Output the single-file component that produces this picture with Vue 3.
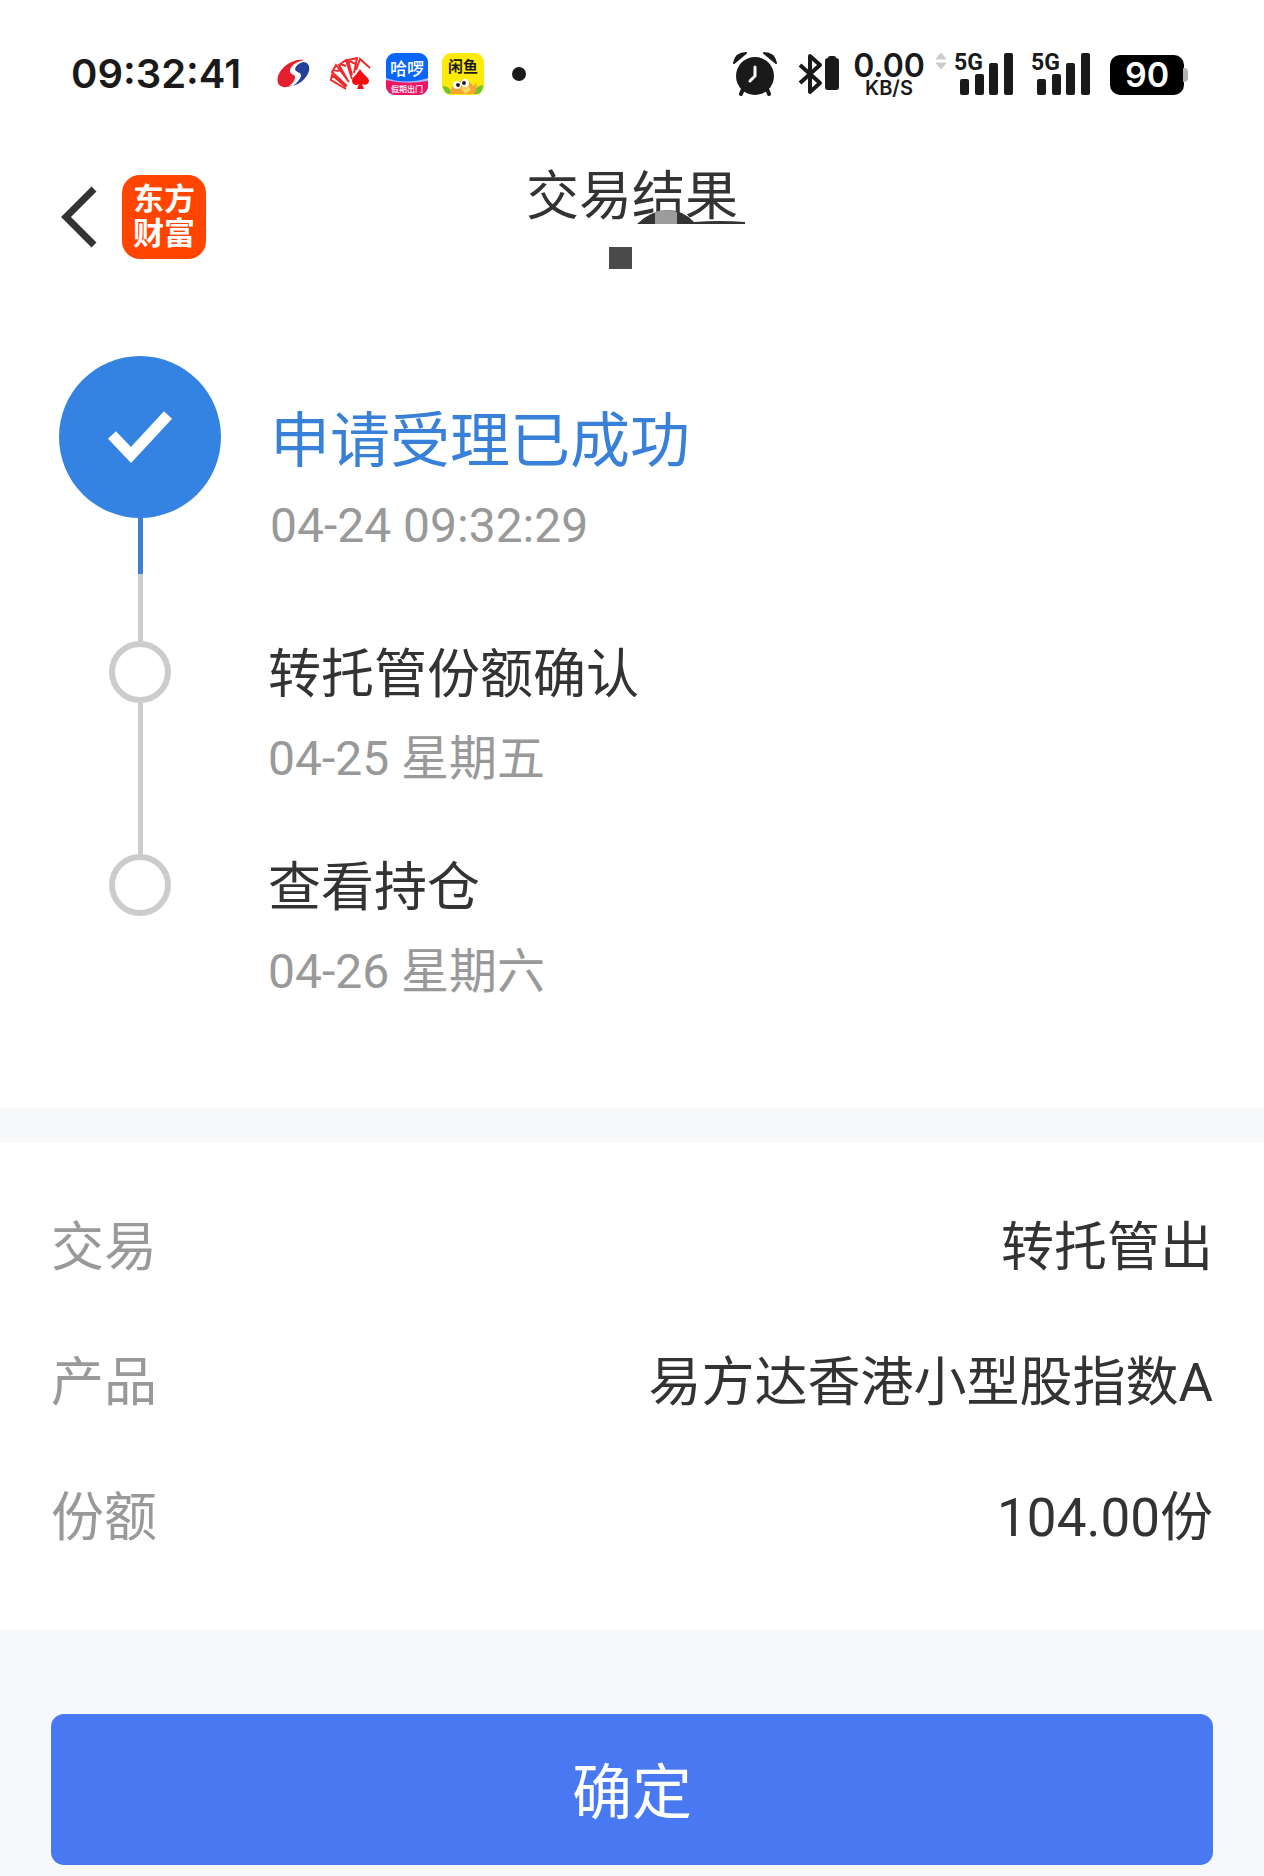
<script setup>
const steps = [
  { title: '申请受理已成功', time: '04-24 09:32:29', done: true },
  { title: '转托管份额确认', time: '04-25 星期五', done: false },
  { title: '查看持仓', time: '04-26 星期六', done: false },
]
const details = [
  { label: '交易', value: '转托管出' },
  { label: '产品', value: '易方达香港小型股指数A' },
  { label: '份额', value: '104.00份' },
]
const networks = [{ id: 1, arrows: true }, { id: 2, arrows: false }]
</script>

<template>
  <div class="page">
    <div class="status">
      <time class="clock">09:32:41</time>
      <div class="notices">
        <svg width="34" height="30" viewBox="0 0 34 30" aria-hidden="true">
          <path d="M28 1C17-1 5 8 2 17c-2 8 2 12 9 11 7-1 10-6 10-10 0-3-5-3-5-6 0-5 6-9 12-11z" fill="#e5202e" />
          <path d="M27 3c5 0 7 4 6 9-2 7-9 13-16 15 5-4 8-8 8-11s-7-3-6-7c1-3 4-5 8-6z" fill="#24409a" />
          <path d="M29 2c-8-1-15 5-15 10 0 4 6 3 5 7-1 4-3 6-6 8 6-1 10-5 10-10 0-4-5-4-4-7 1-4 5-7 10-8z" fill="#fff" />
        </svg>
        <svg width="44" height="38" viewBox="0 0 44 38" fill="none" stroke="#ee2a2d" stroke-width="2" aria-hidden="true">
          <path d="M18 34 3 25l1-5 14 12M19 31 4 17l4-7 13 17M20 26 11 10l7-5 6 19M24 20 20 5l9-2-3 15M28 15l4-11 10 9M3 22h5M5 15l6 1M12 9l6 2M21 6l7 3" />
          <path d="M32 14c-3 6-8 8-8 12 0 4 5 5 7 3l-2 5h7l-2-5c3 2 7 0 7-3 0-4-6-6-9-12z" fill="#f50d10" stroke="none" />
        </svg>
        <svg width="42" height="42" viewBox="0 0 42 42" aria-hidden="true">
          <clipPath id="hello"><rect width="42" height="42" rx="9" /></clipPath>
          <g clip-path="url(#hello)">
            <path d="M0 0h42v42H0z" fill="#0a66fa" />
            <path d="M0 25q20 7 42 0v5H0z" fill="#a9b8ff" />
            <path d="M0 27q20 5 42 1v14H0z" fill="#ee1562" />
          </g>
          <text x="21" y="22" font-size="17" font-weight="500" fill="#fff" text-anchor="middle">哈啰</text>
          <text x="21" y="39" font-size="8" font-weight="500" fill="#fff" text-anchor="middle">假期出门</text>
        </svg>
        <svg width="42" height="42" viewBox="0 0 42 42" aria-hidden="true">
          <rect width="42" height="42" rx="9" fill="#fdea08" />
          <path d="M1 33q7 0 9 8H7q-5-1-6-8zM41 32q-8 1-10 9h5q5-2 5-9z" fill="#6fc52e" />
          <path d="M8 41q1-10 9-13 9-3 14 5l4-3-1 9-4 2z" fill="#f5a534" />
          <path d="M19 35l7-3 3 5-6 4z" fill="#f9d65c" />
          <circle cx="15" cy="32" r="4" fill="#fff" /><circle cx="23" cy="30" r="4" fill="#fff" />
          <circle cx="16" cy="32" r="2" fill="#222" /><circle cx="22" cy="30" r="2" fill="#222" />
          <text x="21" y="19" font-size="15" font-weight="700" fill="#1b1b1b" text-anchor="middle">闲鱼</text>
        </svg>
        <span class="more"></span>
      </div>
      <div class="system">
        <svg width="44" height="44" viewBox="0 0 44 44" aria-hidden="true">
          <circle cx="22" cy="24" r="19" fill="#1a1a1a" />
          <path d="M10 37l-2 5M34 37l2 5" stroke="#1a1a1a" stroke-width="4" stroke-linecap="round" />
          <path d="M1 11Q3 1 13 1L1 11zM43 11Q41 1 31 1l12 10z" fill="#1a1a1a" stroke="#1a1a1a" stroke-width="2" stroke-linejoin="round" />
          <path d="M22 15v9l-5 5" fill="none" stroke="#fff" stroke-width="3" stroke-linecap="round" />
        </svg>
        <svg class="bluetooth" width="42" height="44" viewBox="0 0 42 44" aria-hidden="true">
          <path d="M2 13l20 18-10 9V4l10 9L2 31" fill="none" stroke="#1a1a1a" stroke-width="4" stroke-linejoin="round" />
          <path d="M30 6q0-2 2-2h4q2 0 2 2 3 0 3 3v26q0 3-3 3h-8q-3 0-3-3V9q0-3 3-3z" fill="#1a1a1a" />
        </svg>
        <div class="speed"><b>0.00</b><small>KB/S</small></div>
        <div v-for="net in networks" :key="net.id" class="network">
          <svg v-if="net.arrows" class="arrows" width="12" height="18" viewBox="0 0 12 18" aria-hidden="true">
            <path d="M6 1l5 6H1zM6 17l5-6H1z" fill="#ccc" stroke="#ccc" stroke-linejoin="round" />
          </svg>
          <svg class="signal" width="60" height="44" viewBox="0 0 60 44" aria-hidden="true">
            <g fill="#1a1a1a">
              <rect x="6" y="27" width="9" height="16" rx="2" />
              <rect x="21" y="22" width="9" height="21" rx="2" />
              <rect x="35" y="11" width="9" height="32" rx="2" />
              <rect x="50" y="1" width="9" height="42" rx="2" />
            </g>
            <text class="generation" x="0" y="18">5G</text>
          </svg>
        </div>
        <div class="battery"><span>90</span></div>
      </div>
    </div>

    <header class="header">
      <div class="source">
        <button class="back" type="button" aria-label="返回">
          <svg width="37" height="62" viewBox="0 0 37 62" aria-hidden="true">
            <path d="M34 3 6 31l28 28" fill="none" stroke="#333" stroke-width="7" />
          </svg>
        </button>
        <div class="brand"><span>东方</span><span>财富</span></div>
      </div>
      <h1 class="title">
        交易结果
        <svg class="title-mark" width="110" height="15" viewBox="0 0 110 15" aria-hidden="true">
          <path d="M0 14Q13 1 30 0q16 0 27 12 26-2 51 0v2z" fill="#333" />
          <path d="M18 2q12-4 22 0v12H18z" fill="#9b9b9b" />
        </svg>
        <span class="title-block"></span>
      </h1>
    </header>

    <main>
      <ol class="steps">
        <li v-for="step in steps" :key="step.title" class="step" :class="{ done: step.done }">
          <div class="rail">
            <span class="marker">
              <svg v-if="step.done" width="66" height="54" viewBox="0 0 66 54" aria-hidden="true">
                <path d="M5 25l19 20L61 5" fill="none" stroke="#fff" stroke-width="11" />
              </svg>
            </span>
            <span class="line"></span>
          </div>
          <div class="step-text">
            <h2>{{ step.title }}</h2>
            <p>{{ step.time }}</p>
          </div>
        </li>
      </ol>
      <dl class="details">
        <div v-for="row in details" :key="row.label" class="row">
          <dt>{{ row.label }}</dt>
          <dd>{{ row.value }}</dd>
        </div>
      </dl>
    </main>

    <footer class="footer"><button class="confirm" type="button">确定</button></footer>
  </div>
</template>

<style>
body { margin: 0; background: #f7f8fa; }
</style>

<style scoped>
.page { font-family: Roboto, "Noto Sans CJK SC", sans-serif; color: #333; background: #f7f8fa; }
svg { display: block; flex: none; }
h1, h2, p, ol, dl, dd { margin: 0; padding: 0; font-weight: 400; }
button { border: 0; padding: 0; font: inherit; color: inherit; background: none; }

.status { display: flex; align-items: center; height: 140px; padding: 8px 76px 0 71px; box-sizing: border-box; background: #fff; color: #1a1a1a; font-family: Inter, "Noto Sans CJK SC", sans-serif; }
.clock { width: 205px; font-size: 40px; font-weight: 600; line-height: 48px; white-space: nowrap; }
.notices { display: flex; align-items: center; gap: 14px; }
.notices svg:first-child { margin-right: 4px; }
.more { width: 14px; height: 14px; margin-left: 14px; border-radius: 50%; background: #1a1a1a; }
.system { display: flex; align-items: center; margin-left: auto; }
.bluetooth { margin-left: 21px; }
.speed { display: flex; flex-direction: column; align-items: center; width: 70px; margin-left: 14px; }
.speed b { font-size: 32px; font-weight: 600; line-height: 28px; }
.speed small { font-size: 20px; font-weight: 600; line-height: 16px; }
.network { display: flex; align-items: flex-start; margin-left: 11px; }
.network + .network { margin-left: 17px; }
.arrows { margin-right: 7px; }
.signal { overflow: visible; }
.generation { font-family: Roboto, sans-serif; font-size: 23px; font-weight: 700; fill: #1a1a1a; }
.battery { position: relative; display: flex; width: 74px; height: 40px; margin: 2px 4px 0 19px; border-radius: 10px; background: #000; color: #fff; }
.battery::after { content: ""; position: absolute; right: -4px; top: 13px; width: 5px; height: 14px; border-radius: 0 4px 4px 0; background: #b3b3b3; }
.battery span { margin: auto; font-size: 34px; font-weight: 600; line-height: 40px; }

.header { display: grid; grid-template-columns: 1fr auto 1fr; align-items: start; height: 216px; padding: 25px 60px 0; box-sizing: border-box; background: #fff; }
.source { display: flex; align-items: center; gap: 25px; margin-top: 10px; }
.brand { display: flex; flex-direction: column; align-items: center; justify-content: center; width: 84px; height: 84px; border-radius: 18px; background: #ff4500; color: #fff; font-size: 31px; font-weight: 700; line-height: 34px; }
.title { position: relative; font-size: 53px; line-height: 64px; }
.title-mark { position: absolute; left: 111px; top: 45px; }
.title-block { position: absolute; left: 83px; top: 82px; width: 23px; height: 22px; background: #4a4a4a; }

.steps { list-style: none; padding: 0 59px 108px; background: #fff; }
.step { display: flex; gap: 47px; min-height: 213px; }
.step:last-child { min-height: 0; }
.step.done { min-height: 285px; }
.rail { display: flex; flex-direction: column; align-items: center; width: 162px; flex: none; }
.marker { display: flex; align-items: center; justify-content: center; width: 62px; height: 62px; box-sizing: border-box; border: 6px solid #ccc; border-radius: 50%; }
.done .marker { width: 162px; height: 162px; border: 0; background: #3482e1; }
.line { flex: 1; width: 5px; background: #ccc; }
.done .line { background: linear-gradient(#3e80d1 56px, #ccc 56px); }
.step:last-child .line { display: none; }
.step-text { padding-top: 2px; }
.step-text h2 { font-size: 53px; line-height: 64px; }
.step-text p { margin-top: 24px; font-size: 48px; line-height: 56px; color: #999; }
.done .step-text { padding: 54px 0 0 2px; }
.done h2 { font-size: 60px; color: #3880d8; }

.details { margin-top: 34px; padding: 38px 51px 44px; background: #fff; font-size: 53px; }
.row { display: flex; align-items: center; justify-content: space-between; height: 135px; line-height: 64px; }
.row dt { color: #999; }
.footer { padding: 85px 51px 11px; }
.confirm { display: block; width: 100%; height: 151px; padding-top: 9px; box-sizing: border-box; border-radius: 13px; background: #4979f2; color: #fff; font-size: 60px; line-height: 72px; }
</style>
